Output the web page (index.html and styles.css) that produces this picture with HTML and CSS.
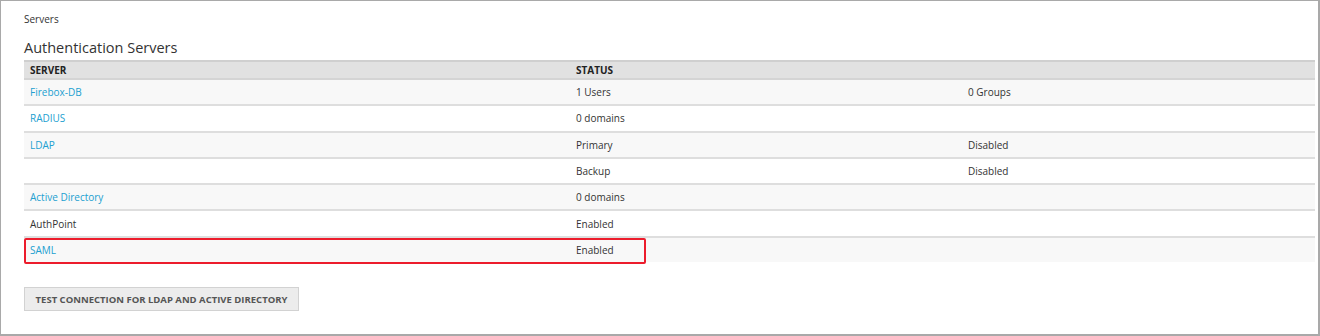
FILE: index.html
```html
<!DOCTYPE html>
<html lang="en">
  <head>
    <meta charset="UTF-8" />
    <title>Servers</title>
    <link rel="stylesheet" href="styles.css">
  </head>
  <body>
    <div class="frame">
      <div class="crumb">Servers</div>
      <h2>Authentication Servers</h2>
      <table class="servers">
        <thead>
          <tr>
            <th class="col-server">SERVER</th>
            <th class="col-status">STATUS</th>
            <th></th>
          </tr>
        </thead>
        <tbody>
          <tr>
            <td><a href="#">Firebox-DB</a></td>
            <td>1 Users</td>
            <td>0 Groups</td>
          </tr>
          <tr>
            <td><a href="#">RADIUS</a></td>
            <td>0 domains</td>
            <td></td>
          </tr>
          <tr>
            <td><a href="#">LDAP</a></td>
            <td>Primary</td>
            <td>Disabled</td>
          </tr>
          <tr>
            <td></td>
            <td>Backup</td>
            <td>Disabled</td>
          </tr>
          <tr>
            <td><a href="#">Active Directory</a></td>
            <td>0 domains</td>
            <td></td>
          </tr>
          <tr>
            <td>AuthPoint</td>
            <td>Enabled</td>
            <td></td>
          </tr>
          <tr class="marked">
            <td><span class="highlight"></span><a href="#">SAML</a></td>
            <td>Enabled</td>
            <td></td>
          </tr>
        </tbody>
      </table>
      <button type="button">Test Connection for LDAP and Active Directory</button>
    </div>
  </body>
</html>
```
FILE: styles.css
```css
body {
  margin: 0;
  padding: 0;
  font-family: "Open Sans", Arial, sans-serif;
  font-size: 10px;
  color: #333;
  background: #fff;
}

.frame {
  box-sizing: border-box;
  width: 1320px;
  height: 336px;
  border: 1px solid #a9a9a9;
  border-right-width: 2px;
  border-bottom-width: 2px;
  padding: 11px 4px 0 23px;
}

.crumb {
  font-size: 10px;
  line-height: 14px;
  color: #333;
}

h2 {
  margin: 13px 0 3px 0;
  font-family: "Open Sans", Arial, sans-serif;
  font-weight: 400;
  font-size: 14.5px;
  line-height: 18px;
  color: #333;
}

.servers {
  width: 1291px;
  border-collapse: collapse;
}

.servers th {
  text-align: left;
  font-weight: 700;
  font-size: 10px;
  line-height: 15px;
  padding: 1px 6px 0 6px;
  background: #e1e1e1;
  border-top: 2px solid #cfcfcf;
  border-bottom: 2px solid #d4d4d4;
  color: #222;
}

.col-server {
  width: 534px;
}

.col-status {
  width: 380px;
}

.servers td {
  height: 24.3px;
  padding: 0 6px;
  border-bottom: 2px solid #dedede;
  vertical-align: middle;
}

.servers tbody tr:nth-child(odd) td {
  background: #f8f8f8;
}

.servers tbody tr:last-child td {
  border-bottom: none;
}

.servers a {
  color: #22a0d0;
  text-decoration: none;
}

.marked td:first-child {
  position: relative;
}

.highlight {
  position: absolute;
  left: 0;
  top: 0;
  width: 618px;
  height: 22px;
  border: 2px solid #ec1c2c;
  border-radius: 2px;
}

button {
  margin-top: 25px;
  height: 24px;
  width: 275px;
  padding: 0;
  border: 1px solid #d2d2d2;
  background: #ececec;
  color: #555;
  font-family: "Open Sans", Arial, sans-serif;
  font-weight: 700;
  font-size: 9.5px;
  text-transform: uppercase;
  cursor: pointer;
}
```
